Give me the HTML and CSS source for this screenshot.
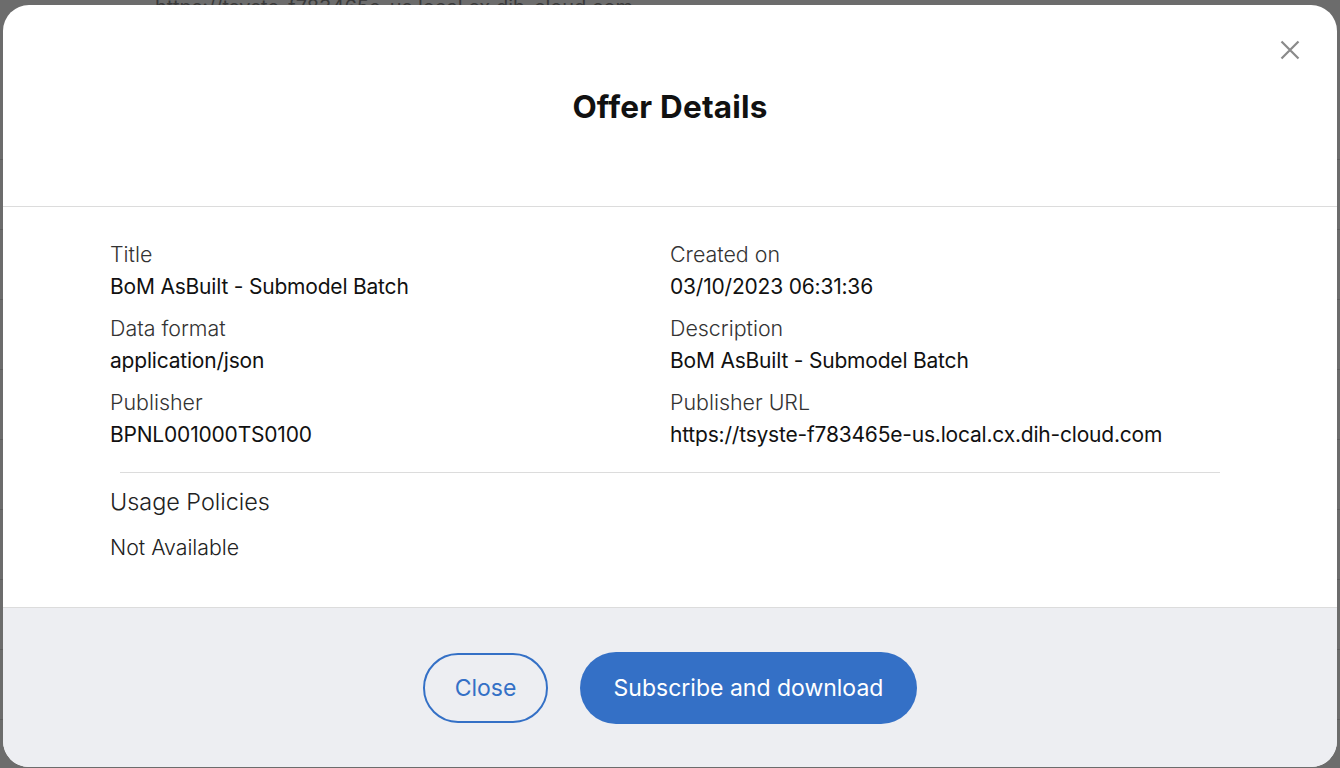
FILE: index.html
```html
<!DOCTYPE html>
<html lang="en">
<head>
<meta charset="utf-8">
<title>Offer Details</title>
<link rel="stylesheet" href="styles.css">
</head>
<body>
<div class="backdrop-page">
  <div class="bg-row bg-first">https://tsyste-f783465e-us.local.cx.dih-cloud.com</div>
  <div class="bg-row"></div>
  <div class="bg-row"></div>
  <div class="bg-row"></div>
  <div class="bg-row"></div>
  <div class="bg-row"></div>
  <div class="bg-row"></div>
  <div class="bg-row"></div>
  <div class="bg-row"></div>
</div>
<div class="modal" role="dialog" aria-labelledby="dlg-title">
  <header class="modal-header">
    <h1 id="dlg-title" class="modal-title">Offer Details</h1>
    <button class="close-x" aria-label="Close">
      <svg width="20" height="20" viewBox="0 0 20 20"><path d="M1.5 1.5 L18.5 18.5 M18.5 1.5 L1.5 18.5" stroke="#8a8a8a" stroke-width="2.2" fill="none"/></svg>
    </button>
  </header>
  <section class="modal-body">
    <div class="grid">
      <div class="field"><div class="label">Title</div><div class="value">BoM AsBuilt - Submodel Batch</div></div>
      <div class="field"><div class="label">Created on</div><div class="value">03/10/2023 06:31:36</div></div>
      <div class="field"><div class="label">Data format</div><div class="value">application/json</div></div>
      <div class="field"><div class="label">Description</div><div class="value">BoM AsBuilt - Submodel Batch</div></div>
      <div class="field"><div class="label">Publisher</div><div class="value">BPNL001000TS0100</div></div>
      <div class="field"><div class="label">Publisher URL</div><div class="value">https://tsyste-f783465e-us.local.cx.dih-cloud.com</div></div>
    </div>
    <hr class="divider">
    <h2 class="policies-title">Usage Policies</h2>
    <p class="policies-text">Not Available</p>
  </section>
  <footer class="modal-footer">
    <button class="btn btn-outline">Close</button>
    <button class="btn btn-primary">Subscribe and download</button>
  </footer>
</div>
</body>
</html>
```

FILE: styles.css
```css
* { box-sizing: border-box; }
html, body { margin: 0; padding: 0; }
body {
  width: 1340px;
  height: 768px;
  overflow: hidden;
  background: #6c6c6c;
  font-family: "Inter", "Liberation Sans", sans-serif;
  position: relative;
}
.backdrop-page {
  display: flex;
  flex-direction: column;
  height: 768px;
  overflow: hidden;
}
.bg-row {
  flex: none;
  height: 70px;
  border-bottom: 1px solid #5e5e5e;
  padding-left: 155px;
  color: #3a3a3a;
  font-size: 20px;
}
.bg-first {
  height: 160px;
  padding-top: 0;
  line-height: 14px;
}
.modal {
  position: absolute;
  left: 3px;
  top: 5px;
  width: 1334px;
  height: 762px;
  background: #fff;
  border-radius: 26px;
  overflow: hidden;
  display: flex;
  flex-direction: column;
}
.modal-header {
  height: 202px;
  flex: none;
  border-bottom: 1px solid #dcdcdc;
  display: flex;
  align-items: center;
  justify-content: center;
  position: relative;
  padding-top: 2px;
}
.modal-title {
  margin: 0;
  font-size: 31.5px;
  font-weight: 700;
  color: #111;
  letter-spacing: 0.2px;
}
.close-x {
  position: absolute;
  right: 33px;
  top: 31px;
  width: 28px;
  height: 28px;
  border: 0;
  background: transparent;
  padding: 4px;
  cursor: pointer;
}
.modal-body {
  flex: 1;
  padding: 31px 107px 0 107px;
}
.grid {
  display: grid;
  grid-template-columns: 560px 1fr;
  row-gap: 10px;
}
.field { display: flex; flex-direction: column; }
.label {
  font-size: 21.4px;
  line-height: 35px;
  color: #333;
  font-weight: 300;
  margin-top: -1.5px;
}
.value {
  font-size: 21px;
  line-height: 30.5px;
  color: #111;
  font-weight: 400;
  letter-spacing: -0.2px;
}
.divider {
  border: 0;
  border-top: 1px solid #dcdcdc;
  margin: 22px 10px 0 10px;
}
.policies-title {
  margin: 14px 0 0 0;
  font-size: 23.4px;
  line-height: 30px;
  font-weight: 300;
  color: #222;
}
.policies-text {
  margin: 15px 0 0 0;
  font-size: 21.3px;
  line-height: 30px;
  font-weight: 300;
  color: #222;
}
.modal-footer {
  height: 160px;
  flex: none;
  background: #edeef2;
  border-top: 1px solid #dcdcdc;
  display: flex;
  justify-content: center;
  align-items: flex-start;
  gap: 32px;
  padding-top: 44px;
}
.btn {
  height: 71px;
  border-radius: 36px;
  font-family: inherit;
  font-size: 23px;
  cursor: pointer;
}
.btn-outline {
  width: 125px;
  background: transparent;
  border: 2px solid #3470c6;
  color: #3470c6;
  margin-top: 1px;
  height: 70px;
}
.btn-primary {
  width: 337px;
  height: 72px;
  background: #3470c6;
  border: 0;
  color: #fff;
}
```
